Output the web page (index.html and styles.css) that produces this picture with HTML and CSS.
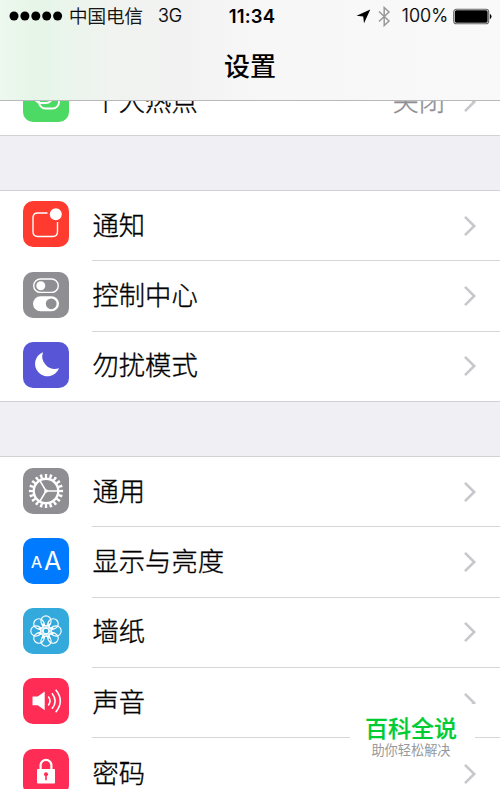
FILE: index.html
```html
<!DOCTYPE html>
<html lang="zh-CN">
<head>
<meta charset="utf-8">
<title>设置</title>
<link rel="stylesheet" href="styles.css">
</head>
<body>
<svg class="defs" width="0" height="0" aria-hidden="true">
  <symbol id="chevron" viewBox="0 0 14 22"><path d="M2 1.8 11.2 11 2 20.2" fill="none" stroke="#c7c7cc" stroke-width="2.6"/></symbol>
</svg>
<div class="screen">
  <header class="header">
    <div class="status">
      <div class="status-left">
        <svg width="54" height="10" viewBox="0 0 54 10"><circle cx="5" cy="5" r="4.5"/><circle cx="15.9" cy="5" r="4.5"/><circle cx="26.8" cy="5" r="4.5"/><circle cx="37.7" cy="5" r="4.5"/><circle cx="48.6" cy="5" r="4.5"/></svg>
        <span class="carrier">中国电信</span>
        <span class="network">3G</span>
      </div>
      <span class="time">11:34</span>
      <div class="status-right">
        <svg width="15" height="15" viewBox="0 0 15 15"><path d="M14.3.5 8 14.2 7.2 7.6.5 6.7z"/></svg>
        <svg class="bluetooth" width="13" height="21" viewBox="0 0 13 21"><path d="M1 5.5 11 15 6.2 19.5V1.5L11 6 1 15.5" fill="none" stroke="#999" stroke-width="1.5"/></svg>
        <span class="percent">100%</span>
        <svg class="battery" width="39" height="17" viewBox="0 0 39 17"><rect x=".7" y="1.2" width="35" height="14.6" rx="2.8" fill="#fff" stroke="#666" stroke-width="1.1"/><rect x="1.8" y="2.3" width="32.8" height="12.4" rx="1.7"/><path d="M36.9 5.7q1.6 1 1.6 2.8t-1.6 2.8z"/></svg>
      </div>
    </div>
    <h1 class="title">设置</h1>
  </header>
  <main class="content">
    <section class="group group-first">
      <div class="row">
        <svg class="icon hotspot" viewBox="0 0 46 46"><g fill="none" stroke="#fff" stroke-width="1.9"><rect x="11.5" y="14" width="18" height="13" rx="6.5"/><rect x="16" y="19.5" width="20" height="13" rx="6.5"/></g></svg>
        <div class="cell"><span class="label">个人热点</span><span class="value">关闭</span><svg class="chevron"><use href="#chevron"/></svg></div>
      </div>
    </section>
    <section class="group group-alerts">
      <div class="row">
        <svg class="icon notifications" viewBox="0 0 46 46"><path d="M24.5 12H14.5Q10 12 10 16.5v14.3q0 4.7 4.7 4.7H29.8q4.7 0 4.7-4.7V21" fill="none" stroke="#fff" stroke-width="1.4"/><circle cx="32.8" cy="13.3" r="6" fill="#fff"/></svg>
        <div class="cell"><span class="label">通知</span><svg class="chevron"><use href="#chevron"/></svg></div>
      </div>
      <div class="row">
        <svg class="icon gray" viewBox="0 0 46 46"><rect x="10.7" y="7" width="24.6" height="13.4" rx="6.7" fill="none" stroke="#fff" stroke-width="1.4"/><circle cx="17.8" cy="13.7" r="4.5" fill="#fff"/><rect x="10" y="24.3" width="26" height="15" rx="7.5" fill="#fff"/><circle cx="28.2" cy="31.8" r="5.4" fill="#8e8e93"/></svg>
        <div class="cell"><span class="label">控制中心</span><svg class="chevron"><use href="#chevron"/></svg></div>
      </div>
      <div class="row">
        <svg class="icon dnd" viewBox="0 0 46 46"><path d="M20 10.2A12.4 12.4 0 1 0 36 26.2A12.6 12.6 0 0 1 20 10.2z" fill="#fff"/></svg>
        <div class="cell"><span class="label">勿扰模式</span><svg class="chevron"><use href="#chevron"/></svg></div>
      </div>
    </section>
    <section class="group">
      <div class="row">
        <svg class="icon gray" viewBox="0 0 46 46"><g fill="none" stroke="#fff"><circle cx="23" cy="23" r="12.3" stroke-width="2.4"/><circle cx="23" cy="23" r="15.1" stroke-width="4" pathLength="40" stroke-dasharray="1 1" stroke-dashoffset=".5"/><path d="M35 23H23L16.8 12.5M23 23 16.8 33.5" stroke-width="1.5"/></g><circle cx="23" cy="23" r="1.8" fill="#fff"/></svg>
        <div class="cell"><span class="label">通用</span><svg class="chevron"><use href="#chevron"/></svg></div>
      </div>
      <div class="row">
        <svg class="icon display" viewBox="0 0 46 46"><text x="8" y="29.5" class="letter" font-size="16" stroke="#fff" stroke-width=".2">A</text><text x="21" y="31.5" class="letter" font-size="25">A</text></svg>
        <div class="cell"><span class="label">显示与亮度</span><svg class="chevron"><use href="#chevron"/></svg></div>
      </div>
      <div class="row">
        <svg class="icon wallpaper" viewBox="0 0 46 46">
          <defs><path id="petal" d="M21.4 20.6C20.2 18.2 17.9 16.2 17.9 12.9A5.1 5.1 0 0 1 28.1 12.9C28.1 16.2 25.8 18.2 24.6 20.6M18.8 15.7A5.1 5.1 0 0 0 27.2 15.7"/></defs>
          <g fill="none" stroke="#fff" stroke-width="1.15"><circle cx="23" cy="23" r="2.9"/><use href="#petal"/><use href="#petal" transform="rotate(45 23 23)"/><use href="#petal" transform="rotate(90 23 23)"/><use href="#petal" transform="rotate(135 23 23)"/><use href="#petal" transform="rotate(180 23 23)"/><use href="#petal" transform="rotate(225 23 23)"/><use href="#petal" transform="rotate(270 23 23)"/><use href="#petal" transform="rotate(315 23 23)"/></g>
        </svg>
        <div class="cell"><span class="label">墙纸</span><svg class="chevron"><use href="#chevron"/></svg></div>
      </div>
      <div class="row">
        <svg class="icon pink" viewBox="0 0 46 46"><path d="M9.5 18.5h5.2l7-5v18.8l-7-5H9.5z" fill="#fff"/><g fill="none" stroke="#fff" stroke-width="1.6"><path d="M25.3 18.6q3.5 4.3 0 8.8M29 15.2q6.3 7.8 0 15.6M32.7 11.8q9.2 11.2 0 22.4"/></g></svg>
        <div class="cell"><span class="label">声音</span><svg class="chevron"><use href="#chevron"/></svg></div>
      </div>
      <div class="row">
        <svg class="icon pink" viewBox="0 0 46 46"><rect x="14" y="20" width="18" height="14.5" rx=".8" fill="#fff"/><path d="M17.6 21V16.3a5.4 5.4 0 0 1 10.8 0V21" fill="none" stroke="#fff" stroke-width="2.2"/><circle cx="23" cy="25.2" r="2" fill="#ff2d55"/><path d="M23 25v6.2" stroke="#ff2d55" stroke-width="1.6"/></svg>
        <div class="cell"><span class="label">密码</span><svg class="chevron"><use href="#chevron"/></svg></div>
      </div>
    </section>
  </main>
  <aside class="badge"><strong class="badge-name">百科全说</strong><span class="badge-note">助你轻松解决</span></aside>
</div>
</body>
</html>
```
FILE: styles.css
```css
* { box-sizing: border-box; }
body { margin: 0; background: #efeff4; color: #000; font-family: Inter, "Noto Sans CJK SC", sans-serif; }
.defs { display: block; }
.screen { position: relative; width: 500px; height: 789px; overflow: hidden; display: flex; flex-direction: column; }
.header { flex: none; height: 101px; border-bottom: 1px solid #b9b9bb; background: linear-gradient(90deg, #edf8ee 0, #e6f5e8 40px, #ebf5ec 72px, #f0f3f0 110px, #f2f2f2 180px, #f7f7f7 260px, #f9f9f9 500px); }
.status { height: 32px; padding: 0 8px 0 9px; display: grid; grid-template-columns: 1fr auto 1fr; align-items: center; line-height: 32px; font-size: 18px; }
.status-left, .status-right { display: flex; align-items: center; }
.status-right { justify-content: flex-end; }
.carrier { margin-left: 6px; font-size: 18.5px; font-weight: 300; -webkit-text-stroke: .3px currentColor; }
.network { margin-left: 15px; letter-spacing: -.2px; font-weight: 300; -webkit-text-stroke: .2px currentColor; }
.time { padding-left: 3px; font-weight: 600; font-size: 18.5px; letter-spacing: .2px; }
.bluetooth { margin-left: 7px; }
.percent { margin-left: 11px; letter-spacing: 0; font-weight: 300; -webkit-text-stroke: .2px currentColor; }
.battery { margin-left: 5px; }
.title { margin: 15px 0 0; height: 40px; line-height: 40px; text-align: center; font-size: 26px; font-weight: 500; }
.content { flex: 1; min-height: 0; overflow: hidden; }
.group { margin-bottom: 54px; background: #fff; border-top: 1px solid #d2d2d6; border-bottom: 1px solid #d2d2d6; }
.group-first { margin-top: -36px; }
.row { height: 70.3px; padding-left: 23px; display: flex; }
.group-first .row { height: 69px; }
.group-first .cell { padding-top: 3px; }
.group-alerts .row:last-child { height: 69.6px; }
.icon { flex: none; width: 46px; height: 46px; margin: 10.4px 23px 0 0; border-radius: 10px; }
.cell { flex: 1; padding-right: 23px; display: flex; align-items: center; border-bottom: 1px solid #d6d6d9; }
.row:last-child .cell { border-bottom: 0; }
.label { flex: 1; padding-left: .5px; font-size: 26.3px; line-height: 40px; font-weight: 300; -webkit-text-stroke: .35px currentColor; }
.value { color: #8e8e93; font-size: 26.3px; line-height: 40px; margin-right: 18px; font-weight: 300; -webkit-text-stroke: .35px currentColor; }
.chevron { width: 14px; height: 22px; }
.hotspot { background: #4cd964; }
.notifications { background: #ff3b30; }
.gray { background: #8e8e93; }
.dnd { background: #5856d6; }
.display { background: #007aff; }
.wallpaper { background: #34aadc; }
.pink { background: #ff2d55; }
.letter { fill: #fff; font-family: Inter, sans-serif; }
.badge { position: absolute; left: 350px; top: 704px; width: 125px; height: 60px; padding: 12px 3px 0 0; background: #fff; display: flex; flex-direction: column; align-items: center; }
.badge-name { color: #0c3; font-size: 23px; line-height: 27px; font-weight: 500; -webkit-text-stroke: .2px currentColor; }
.badge-note { color: #999; font-size: 13.2px; line-height: 15px; font-weight: 400; }
```
